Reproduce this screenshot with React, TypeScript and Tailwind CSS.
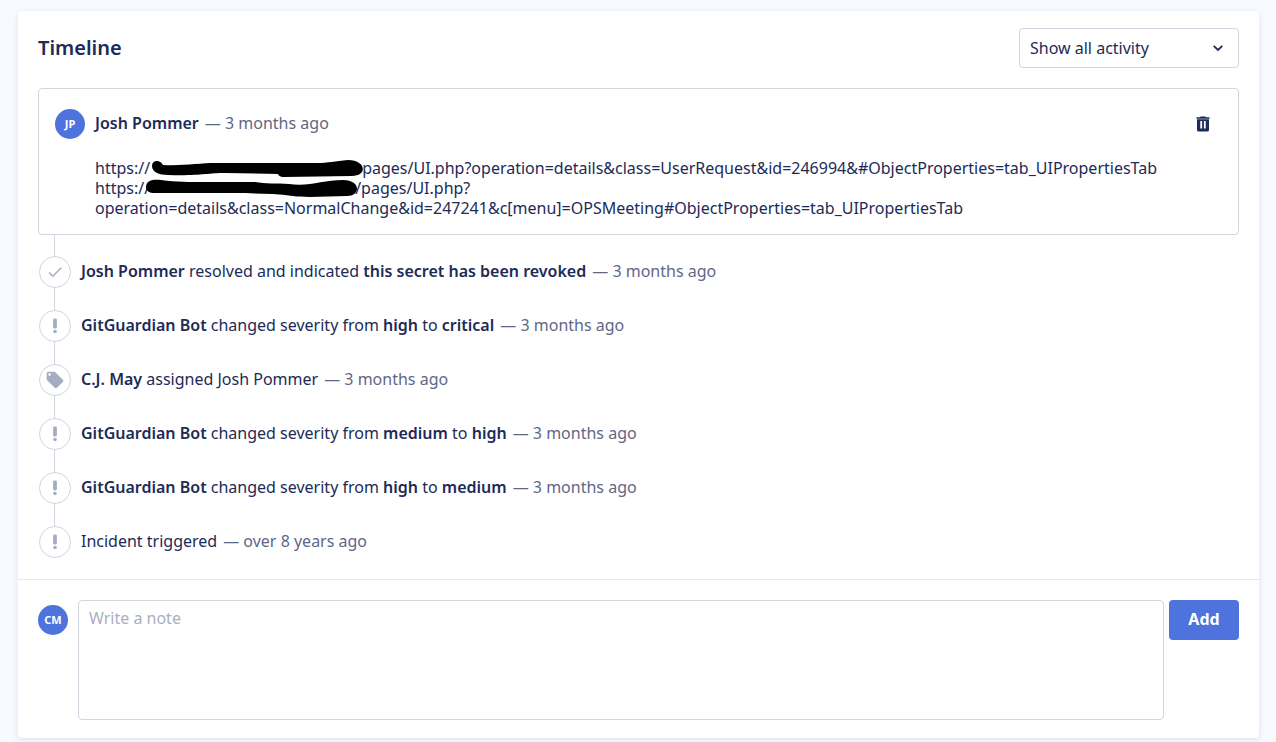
import React, { useState } from 'react';
import { MdCheck, MdLocalOffer } from 'react-icons/md';

type EventIcon = 'check' | 'alert' | 'tag';

interface TimelineEvent {
  id: number;
  icon: EventIcon;
  content: React.ReactNode;
  date: string;
}

const events: TimelineEvent[] = [
  {
    id: 1,
    icon: 'check',
    content: (
      <>
        <b className="font-semibold">Josh Pommer</b> resolved and indicated{' '}
        <b className="font-semibold">this secret has been revoked</b>
      </>
    ),
    date: '3 months ago',
  },
  {
    id: 2,
    icon: 'alert',
    content: (
      <>
        <b className="font-semibold">GitGuardian Bot</b> changed severity from{' '}
        <b className="font-semibold">high</b> to <b className="font-semibold">critical</b>
      </>
    ),
    date: '3 months ago',
  },
  {
    id: 3,
    icon: 'tag',
    content: (
      <>
        <b className="font-semibold">C.J. May</b> assigned Josh Pommer
      </>
    ),
    date: '3 months ago',
  },
  {
    id: 4,
    icon: 'alert',
    content: (
      <>
        <b className="font-semibold">GitGuardian Bot</b> changed severity from{' '}
        <b className="font-semibold">medium</b> to <b className="font-semibold">high</b>
      </>
    ),
    date: '3 months ago',
  },
  {
    id: 5,
    icon: 'alert',
    content: (
      <>
        <b className="font-semibold">GitGuardian Bot</b> changed severity from{' '}
        <b className="font-semibold">high</b> to <b className="font-semibold">medium</b>
      </>
    ),
    date: '3 months ago',
  },
  { id: 6, icon: 'alert', content: 'Incident triggered', date: 'over 8 years ago' },
];

const AlertMark: React.FC = () => (
  <svg width="4" height="16" viewBox="0 0 4 16" fill="currentColor">
    <rect x="0.1" y="0.5" width="3.8" height="10" rx="1.4" />
    <circle cx="2" cy="13.5" r="1.8" />
  </svg>
);

const TrashIcon: React.FC = () => (
  <svg width="14" height="16" viewBox="0 0 14 16" fill="currentColor">
    <path
      fillRule="evenodd"
      d="M4.6 0.6h4.8l.6.7h3.5v1.5H.5V1.300h3.500zM1 3.300h12v10.700a1.500 1.500 0 0 1-1.500 1.500h-9A1.500 1.500 0 0 1 1 14zM4.300 5v7.500h1.800V5zM7.900 5v7.500h1.800V5z"
    />
  </svg>
);

const Avatar: React.FC<{ initials: string }> = ({ initials }) => (
  <div className="flex h-[30px] w-[30px] shrink-0 items-center justify-center rounded-full bg-[#4e73dc] text-[11px] font-bold text-white">
    {initials}
  </div>
);

const EventDate: React.FC<{ date: string }> = ({ date }) => (
  <span className="ml-1.5 text-[#5f6786]">— {date}</span>
);

// Host names are struck out with a marker
const FirstMarker: React.FC = () => (
  <svg className="inline-block h-5 w-[212px] overflow-visible align-top" viewBox="0 0 212 20">
    <path d="M2 8C2 2 10 1 13 7C35 8 48 5 67 5L167 5C178 5 185 3 198 2C216 2 218 18 202 18L134 19C130 19 129 18 128 16L75 15C57 15 50 18 18 17C9 17 2 14 2 8Z" />
  </svg>
);

const SecondMarker: React.FC = () => (
  <svg className="inline-block h-5 w-[205px] overflow-visible align-top" viewBox="0 0 205 20">
    <path d="M-4 9C-4 2 4 1 11 2C27 4 39 4 57 4L105 4C115 6 127 5 139 6C159 9 173 2 193 2C211 2 211 18 197 18C179 18 157 20 143 18C125 15 109 16 95 15L5 15C-1 15-4 13-4 9Z" />
  </svg>
);

const icons: Record<EventIcon, React.ReactNode> = {
  check: <MdCheck size={18} />,
  alert: <AlertMark />,
  tag: <MdLocalOffer size={20} />,
};

const App: React.FC = () => {
  const [note, setNote] = useState('');

  return (
    <div className="min-h-screen bg-[#f7faff] pt-[11px] pr-[17px] pl-[18px] font-['Noto_Sans',sans-serif] text-base leading-5 text-[#1c2b57]">
      <main className="rounded bg-white shadow-[0_2px_6px_rgba(30,60,130,0.12)]">
        <section className="px-5 pt-[17px] pb-[21px]">
          <header className="flex items-center justify-between">
            <h1 className="text-xl font-semibold">Timeline</h1>
            <div className="relative w-[220px]">
              <select
                aria-label="Activity filter"
                className="h-10 w-full appearance-none rounded border border-[#d1d5e0] bg-white px-2.5"
              >
                <option>Show all activity</option>
              </select>
              <svg
                className="pointer-events-none absolute top-4 right-[15px] h-2 w-3"
                viewBox="0 0 12 8"
                fill="none"
                stroke="currentColor"
                strokeWidth="1.8"
              >
                <path d="M1.700 1.800L6 6L10.300 1.800" />
              </svg>
            </div>
          </header>

          <article className="mt-5 rounded border border-[#d1d5e0] px-4 pt-5 pb-4">
            <div className="flex items-center">
              <Avatar initials="JP" />
              <p className="ml-2.5 flex-1 pb-0.5">
                <b className="font-semibold">Josh Pommer</b>
                <EventDate date="3 months ago" />
              </p>
              <button type="button" aria-label="Delete note" className="mr-3">
                <TrashIcon />
              </button>
            </div>
            <p className="mt-[19px] ml-10">
              https://
              <FirstMarker />
              pages/UI.php?operation=details&amp;class=UserRequest&amp;id=246994&amp;#ObjectProperties=tab_UIPropertiesTab
              <br />
              https://
              <SecondMarker />
              /pages/UI.php?
              <br />
              operation=details&amp;class=NormalChange&amp;id=247241&amp;c[menu]=OPSMeeting#ObjectProperties=tab_UIPropertiesTab
            </p>
          </article>

          <ul className="-mt-px pl-px">
            {events.map((event) => (
              <li key={event.id} className="flex">
                <div className="flex w-8 flex-col items-center">
                  <div className="mr-px h-[22px] w-px bg-[#d1d5e0]" />
                  <div className="flex h-8 w-8 items-center justify-center rounded-full border border-[#d1d5e0] text-[#a5aec0]">
                    {icons[event.icon]}
                  </div>
                </div>
                <p className="mt-[27px] ml-2.5">
                  {event.content}
                  <EventDate date={event.date} />
                </p>
              </li>
            ))}
          </ul>
        </section>

        <form className="flex border-t border-[#e5e8ee] px-5 pt-5 pb-[18px]" onSubmit={(e) => e.preventDefault()}>
          <div className="pt-[5px]">
            <Avatar initials="CM" />
          </div>
          <textarea
            aria-label="Note"
            className="ml-2.5 h-[120px] flex-1 resize-none rounded border border-[#d1d5e0] px-2.5 py-[7px] placeholder:text-[#a9afbf]"
            placeholder="Write a note"
            value={note}
            onChange={(e) => setNote(e.target.value)}
          />
          <button type="submit" className="ml-[5px] h-10 w-[70px] rounded bg-[#4e73dc] pb-0.5 font-bold text-white">
            Add
          </button>
        </form>
      </main>
    </div>
  );
};

export default App;
